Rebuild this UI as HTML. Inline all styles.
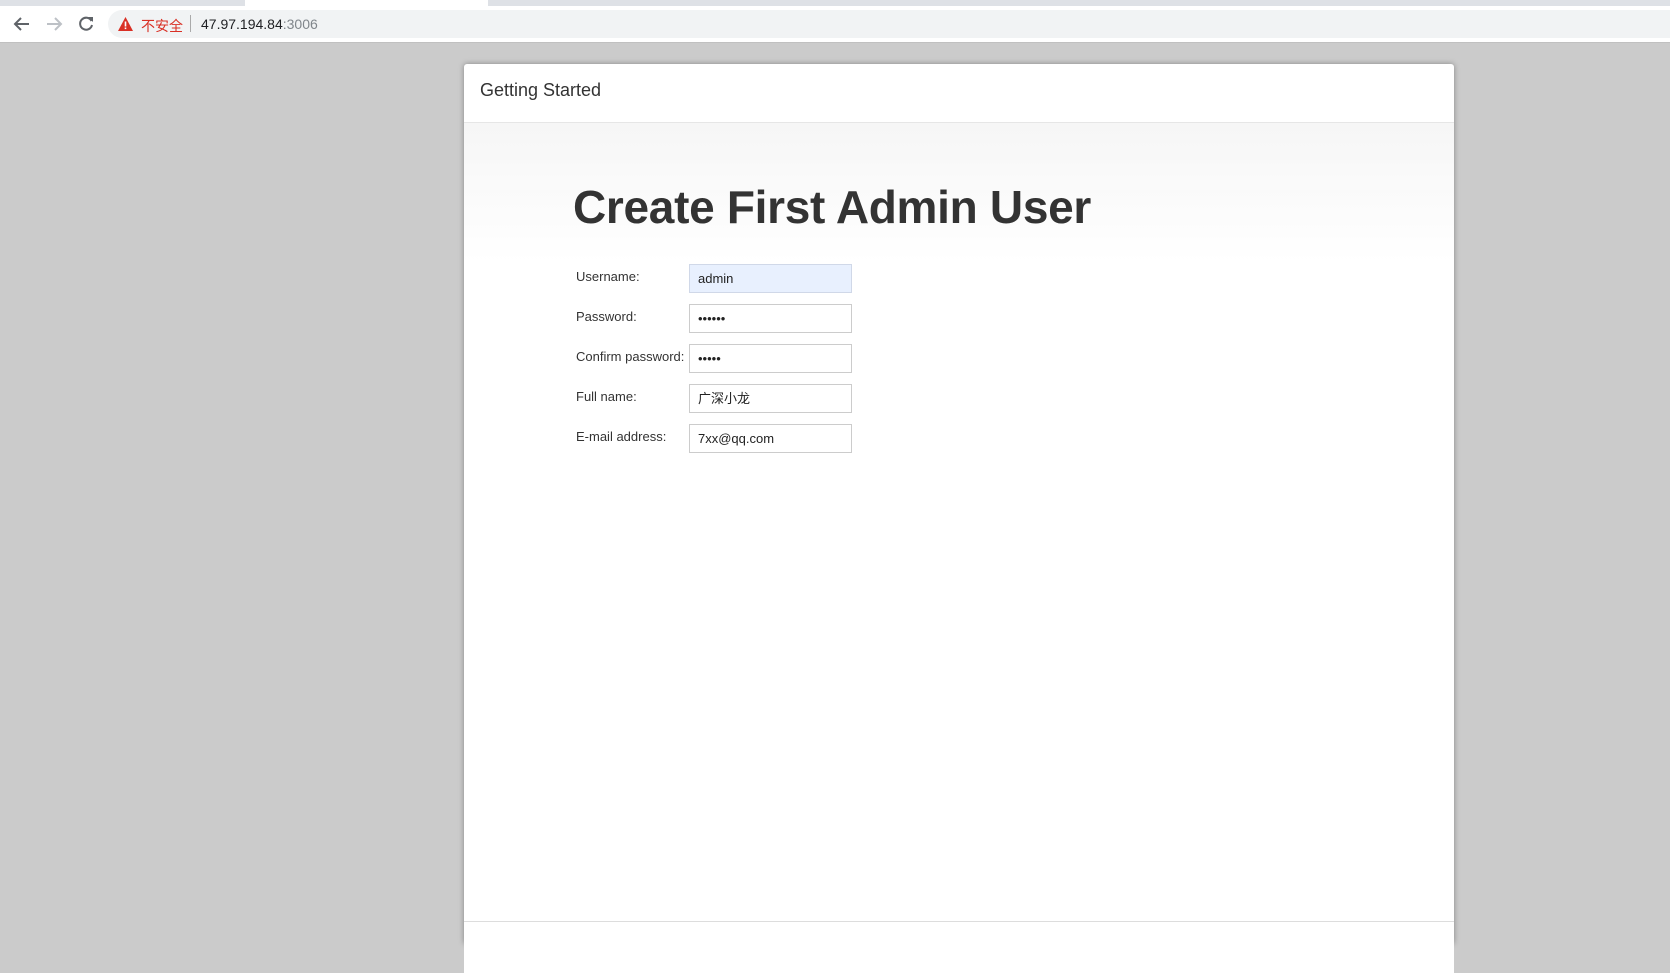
<!DOCTYPE html>
<html><head><meta charset="utf-8"><style>
body{margin:0;width:1670px;height:927px;overflow:hidden;background:#cbcbcb;font-family:"Liberation Sans","Noto Sans CJK SC",sans-serif;position:relative}
.tabs{position:absolute;left:0;top:0;width:1670px;height:6px;background:#dee1e6}
.tabs .t{position:absolute;left:245px;top:0;width:243px;height:6px;background:#fff}
.bar{position:absolute;left:0;top:6px;width:1670px;height:36px;background:#fff;border-bottom:1px solid #c0c0c0}
.omni{position:absolute;left:108px;top:4px;right:0;height:28px;background:#f1f3f4;border-radius:14px 0 0 14px}
.nav{position:absolute;top:9px}
.card{position:absolute;left:464px;top:64px;width:990px;height:880px;background:#fff;border-radius:3px;box-shadow:0 0 6px rgba(0,0,0,.35)}
.hd{height:58px;border-bottom:1px solid #e6e6e6;font-size:18px;color:#333;padding-left:16px;line-height:52px}
.body{background:linear-gradient(#f6f6f6,#fff 140px);height:850px;position:relative}
h1{position:absolute;left:109px;top:57px;margin:0;font-size:46px;font-weight:bold;color:#333;letter-spacing:-0.3px}
.row{position:absolute;left:112px;font-size:13px;color:#333}
.inp{position:absolute;left:225px;border:1px solid #ccc;background:#fff;font-size:13px;line-height:27px;padding-left:8px;box-sizing:border-box;width:163px;height:29px;color:#222}
</style></head><body>
<div class="tabs"><div class="t"></div></div>
<div class="bar">
<svg class="nav" style="left:13px" width="18" height="18" viewBox="0 0 18 18"><path d="M16 9H3M8 3L2 9l6 6" stroke="#5f6368" stroke-width="2" fill="none"/></svg>
<svg class="nav" style="left:45px" width="18" height="18" viewBox="0 0 18 18"><path d="M2 9h13M10 3l6 6-6 6" stroke="#bdc1c6" stroke-width="2" fill="none"/></svg>
<svg class="nav" style="left:77px" width="18" height="18" viewBox="0 0 18 18"><path d="M14.5 6A6 6 0 1 0 15 10" stroke="#5f6368" stroke-width="2" fill="none"/><path d="M11 2h5v5z" fill="#5f6368"/></svg>
<div class="omni">
<svg style="position:absolute;left:10px;top:7px" width="15" height="14" viewBox="0 0 15 14"><path d="M7.5 0L15 14H0Z" fill="#d93025"/><rect x="6.7" y="4.5" width="1.6" height="5" fill="#fff"/><rect x="6.7" y="10.5" width="1.6" height="1.6" fill="#fff"/></svg>
<span style="position:absolute;left:33px;top:6px;font-size:14px;color:#d93025">不安全</span>
<span style="position:absolute;left:82px;top:5px;width:1px;height:17px;background:#aaa"></span>
<span style="position:absolute;left:93px;top:6px;font-size:14px;color:#202124">47.97.194.84<span style="color:#80868b">:3006</span></span>
</div></div>
<div class="card">
<div class="hd">Getting Started</div>
<div class="body">
<h1>Create First Admin User</h1>
<div class="row" style="top:146px">Username:</div><div class="inp" style="top:141px;background:#e8f0fe;border-color:#d0d8e8">admin</div>
<div class="row" style="top:186px">Password:</div><div class="inp" style="top:181px">&bull;&bull;&bull;&bull;&bull;&bull;</div>
<div class="row" style="top:226px">Confirm password:</div><div class="inp" style="top:221px">&bull;&bull;&bull;&bull;&bull;</div>
<div class="row" style="top:266px">Full name:</div><div class="inp" style="top:261px">广深小龙</div>
<div class="row" style="top:306px">E-mail address:</div><div class="inp" style="top:301px">7xx@qq.com</div>
</div></div>
<div style="position:absolute;left:464px;top:921px;width:990px;height:1px;background:#ddd"></div>
</body></html>
